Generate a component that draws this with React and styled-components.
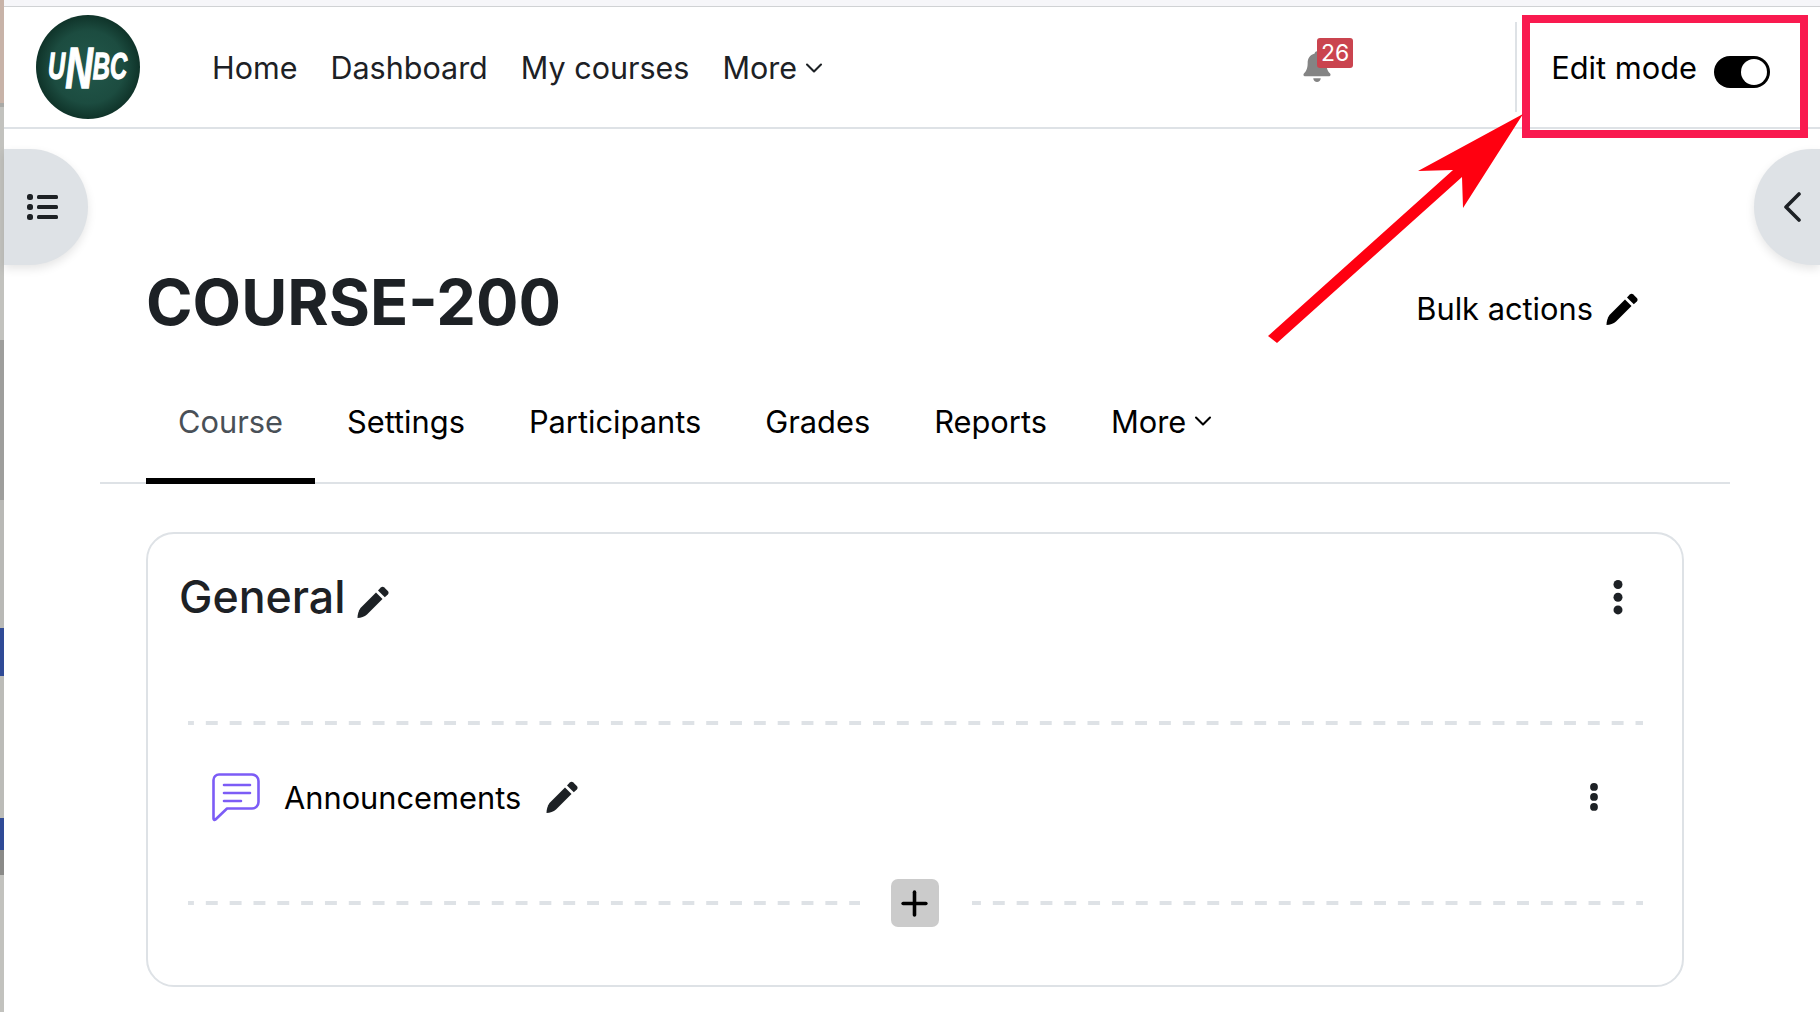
import React from 'react'
import styled, { createGlobalStyle } from 'styled-components'
import { ChevronDown, Plus } from 'lucide-react'

const GlobalStyle = createGlobalStyle`
  html, body { margin: 0; height: 100%; background: #fff; }
  body { font-family: Inter, "Liberation Sans", sans-serif; color: #1d2125; overflow: hidden; }
  #root { height: 100%; }
`

const Screen = styled.div`
  position: relative;
  width: 1820px;
  height: 1012px;
  display: flex;
  overflow: hidden;
`

const DesktopEdge = styled.div`
  width: 4px;
  flex: none;
  background: linear-gradient(180deg,
    #c8b3a8 0 103px, #a9a9a6 103px 107px, #c2c2be 107px 340px, #9e9e9c 340px 500px,
    #b9b9b6 500px 628px, #2f4a96 628px 676px, #bcbcb8 676px 818px, #2f4a96 818px 850px,
    #8a8a88 850px 875px, #c2c2be 875px);
`

const Window = styled.div`
  position: relative;
  flex: 1;
  min-width: 0;
  display: flex;
  flex-direction: column;
`

const TitleStrip = styled.div`
  height: 6px;
  background: #f6f6f9;
  border-bottom: 1px solid #d0d2d4;
`

const Navbar = styled.nav`
  height: 120px;
  display: flex;
  align-items: center;
  padding: 0 0 0 32px;
  border-bottom: 2px solid #dee2e6;
  flex: none;
`

const Logo = styled.svg`
  width: 104px;
  height: 104px;
  flex: none;
  margin-right: 72px;
`

const NavLink = styled.a`
  display: flex;
  align-items: center;
  font-size: 30.5px;
  color: #1d2125;
  margin-right: 33px;
  margin-top: 2px;
  line-height: 36px;
`

const NavChevron = styled(ChevronDown)`
  margin-left: 3px;
`

const Spacer = styled.div`
  flex: 1;
`

const Bell = styled.div`
  position: relative;
  width: 28px;
  height: 34px;
  margin-right: 184px;
  color: #848484;
`

const Badge = styled.span`
  position: absolute;
  left: 14px;
  top: -12px;
  width: 36px;
  height: 30px;
  border-radius: 3px;
  background: #ca444f;
  color: #fff;
  font-size: 23px;
  line-height: 30px;
  text-align: center;
`

const Divider = styled.div`
  width: 2px;
  height: 90px;
  background: #dee2e6;
  align-self: flex-start;
  margin-top: 15px;
`

const EditMode = styled.div`
  display: flex;
  align-items: center;
  margin-left: 34px;
  margin-right: 50px;
  margin-top: 1px;
  font-size: 30.8px;
  line-height: 36px;
  color: #000;
  white-space: nowrap;
`

const Toggle = styled.span`
  display: block;
  position: relative;
  width: 56px;
  height: 32px;
  margin-left: 17px;
  margin-top: 9px;
  border-radius: 16px;
  background: #000;
  &::after {
    content: '';
    position: absolute;
    top: 3px;
    right: 3px;
    width: 26px;
    height: 26px;
    border-radius: 50%;
    background: #fff;
  }
`

const Main = styled.main`
  flex: 1;
  padding: 0 90px 0 96px;
  display: flex;
  flex-direction: column;
`

const HeaderRow = styled.div`
  display: flex;
  align-items: center;
  justify-content: space-between;
  height: 76px;
  margin-top: 135px;
  padding: 0 92px 0 46px;
`

const Title = styled.h1`
  margin: 0;
  font-size: 63px;
  line-height: 76px;
  font-weight: 700;
  color: #1d2125;
`

const BulkActions = styled.div`
  display: flex;
  align-items: center;
  gap: 13px;
  font-size: 30.8px;
  color: #000;
  margin-top: 13px;
`

const Tabs = styled.div`
  display: flex;
  box-sizing: border-box;
  height: 102px;
  margin-top: 42px;
  padding-left: 46px;
  border-bottom: 2px solid #dee2e6;
`

const Tab = styled.a`
  display: flex;
  align-items: center;
  flex: none;
  box-sizing: border-box;
  height: 102px;
  padding: 0 32px 24px;
  font-size: 30.8px;
  color: ${p => (p.$active ? '#495057' : '#000')};
  box-shadow: ${p => (p.$active ? 'inset 0 -6px 0 #000' : 'none')};
`

const Card = styled.section`
  margin: 48px 46px 0;
  height: 455px;
  box-sizing: border-box;
  border: 2px solid #dee2e6;
  border-radius: 28px;
  padding: 0 33px;
  display: flex;
  flex-direction: column;
`

const CardHead = styled.div`
  display: flex;
  align-items: center;
  height: 64px;
  margin-top: 31px;
  padding-right: 25px;
`

const CardTitle = styled.h3`
  margin: 0 0 0 -2px;
  font-size: 44.7px;
  line-height: 64px;
  font-weight: 500;
  color: #1d2125;
`

const TitlePencil = styled.span`
  display: flex;
  margin-left: 11px;
  margin-top: 10px;
`

const Dashed = styled.div`
  flex: 1;
  height: 4px;
  background-image: linear-gradient(90deg, #dee2e6 50%, transparent 50%);
  background-size: 23.83px 4px;
  background-position-x: ${p => p.$phase}px;
`

const FullDash = styled(Dashed)`
  flex: none;
  margin: 92px 6px 0 7px;
`

const Activity = styled.div`
  display: flex;
  align-items: center;
  height: 144px;
  margin-bottom: 10px;
  padding: 0 49px 0 31px;
`

const ActivityName = styled.span`
  font-size: 30.8px;
  color: #000;
  margin: 0 25px 0 24px;
`

const AddRow = styled.div`
  display: flex;
  align-items: center;
  margin: 0 6px 0 7px;
  height: 48px;
`

const AddButton = styled.button`
  width: 48px;
  height: 48px;
  border: 0;
  padding: 0;
  margin: 0 33px 0 31px;
  border-radius: 7px;
  background: #cbcbcb;
  color: #000;
  display: flex;
  align-items: center;
  justify-content: center;
`

const Drawer = styled.div`
  position: absolute;
  top: 149px;
  height: 116px;
  background: #dee2e6;
  box-shadow: 0 4px 10px rgba(0, 0, 0, 0.1);
  display: flex;
  align-items: center;
  color: #1d2125;
  ${p => (p.$side === 'left'
    ? 'left: 0; width: 84px; padding-left: 23px; box-sizing: border-box; border-radius: 0 58px 58px 0;'
    : 'right: 0; width: 66px; padding-left: 30px; box-sizing: border-box; border-radius: 58px 0 0 58px;')}
`

const Annotation = styled.svg`
  position: absolute;
  left: 0;
  top: 0;
  width: 1820px;
  height: 1012px;
  pointer-events: none;
`

function Pencil({ size = 32, color = '#000' }) {
  return (
    <svg width={size} height={size} viewBox="0 0 32 32" fill={color}>
      <path d="M0.500 32c0-3.500 1-7.500 3-10L19 6.500l6.500 6.500L10 28.500c-2.500 2-6 3.500-9.500 3.500z" />
      <path d="M21 4.500l2.800-3c1-1 2.500-1 3.500 0l3.500 3.500c1 1 1 2.500 0 3.500l-3 2.800z" />
    </svg>
  )
}

function Dots({ gap, r }) {
  return (
    <svg width="12" height={gap * 2 + r * 2 + 2} viewBox={`0 0 12 ${gap * 2 + r * 2 + 2}`} fill="#1d2125">
      <circle cx="6" cy={r + 1} r={r} />
      <circle cx="6" cy={gap + r + 1} r={r} />
      <circle cx="6" cy={gap * 2 + r + 1} r={r} />
    </svg>
  )
}

export default function App() {
  return (
    <Screen>
      <GlobalStyle />
      <DesktopEdge />
      <Window>
        <TitleStrip />
        <Navbar>
          <Logo viewBox="0 0 104 104">
            <defs>
              <radialGradient id="logoBg" cx="50%" cy="50%" r="50%">
                <stop offset="0%" stopColor="#22584b" />
                <stop offset="70%" stopColor="#1c4c40" />
                <stop offset="100%" stopColor="#0f3329" />
              </radialGradient>
            </defs>
            <circle cx="52" cy="52" r="52" fill="url(#logoBg)" />
            <text
              transform="translate(12 64) scale(0.66 1)"
              fontFamily="Liberation Sans, sans-serif"
              fontWeight="700"
              fontStyle="italic"
              fontSize="36"
              fill="#fff"
              stroke="#fff"
              strokeWidth="1.300"
            >
              U<tspan fontSize="58" dy="9">N</tspan><tspan dy="-9">BC</tspan>
            </text>
          </Logo>
          <NavLink>Home</NavLink>
          <NavLink>Dashboard</NavLink>
          <NavLink>My courses</NavLink>
          <NavLink>More<NavChevron size={28} strokeWidth={1.8} /></NavLink>
          <Spacer />
          <Bell>
            <svg width="28" height="34" viewBox="0 0 30 34" fill="currentColor">
              <path d="M15 0c-1.500 0-2.500 1-2.500 2.500C7 4 5 8 5 13c0 6-2 9-4 11-1 1-.5 3 1 3h26c1.500 0 2-2 1-3-2-2-4-5-4-11 0-5-2-9-7.500-10.500C17.500 1 16.500 0 15 0z" />
              <path d="M11 29h8c0 2.500-2 4-4 4s-4-1.500-4-4z" />
            </svg>
            <Badge>26</Badge>
          </Bell>
          <Divider />
          <EditMode>Edit mode<Toggle /></EditMode>
        </Navbar>
        <Main>
          <HeaderRow>
            <Title>COURSE-200</Title>
            <BulkActions>Bulk actions <Pencil /></BulkActions>
          </HeaderRow>
          <Tabs>
            <Tab $active>Course</Tab>
            <Tab>Settings</Tab>
            <Tab>Participants</Tab>
            <Tab>Grades</Tab>
            <Tab>Reports</Tab>
            <Tab>More<NavChevron size={28} strokeWidth={1.8} /></Tab>
          </Tabs>
          <Card>
            <CardHead>
              <CardTitle>General</CardTitle>
              <TitlePencil><Pencil color="#1d2125" /></TitlePencil>
              <Spacer />
              <Dots gap={12.7} r={4.5} />
            </CardHead>
            <FullDash $phase={-6} />
            <Activity>
              <svg width="48" height="49" viewBox="0 0 48 49" fill="none" stroke="#7c5cf6" strokeWidth="2.600">
                <path d="M7 1.500h33a6.500 6.500 0 0 1 6.500 6.500v21a6.500 6.500 0 0 1-6.500 6.500H15L3.500 46.500c-1 .8-2 .2-2-1V7A5.500 5.500 0 0 1 7 1.500z" strokeLinejoin="round" />
                <path d="M12 12h26M12 20h26M12 28h17" strokeLinecap="round" />
              </svg>
              <ActivityName>Announcements</ActivityName>
              <Pencil color="#1d2125" />
              <Spacer />
              <Dots gap={10} r={3.9} />
            </Activity>
            <AddRow>
              <Dashed $phase={-6} />
              <AddButton><Plus size={39} strokeWidth={2.2} /></AddButton>
              <Dashed $phase={-3} />
            </AddRow>
          </Card>
        </Main>
        <Drawer $side="left">
          <svg width="31" height="26" viewBox="0 0 31 26" fill="currentColor">
            <rect x="0" y="0" width="6" height="6" rx="2.500" />
            <rect x="0" y="10" width="6" height="6" rx="2.500" />
            <rect x="0" y="20" width="6" height="6" rx="2.500" />
            <rect x="10" y="1" width="21" height="4" rx="1.500" />
            <rect x="10" y="11" width="21" height="4" rx="1.500" />
            <rect x="10" y="21" width="21" height="4" rx="1.500" />
          </svg>
        </Drawer>
        <Drawer $side="right">
          <svg width="17" height="30" viewBox="0 0 17 30" fill="none" stroke="currentColor" strokeWidth="3.600" strokeLinecap="round" strokeLinejoin="round">
            <path d="M15 2L2 15l13 13" />
          </svg>
        </Drawer>
      </Window>
      <Annotation viewBox="0 0 1820 1012">
        <rect x="1526" y="19" width="278" height="115" fill="none" stroke="#f91a4f" strokeWidth="8" />
        <polygon points="1523,114 1463,208 1462,177 1277,343 1268,336 1453,170 1418,171" fill="#ff0010" />
      </Annotation>
    </Screen>
  )
}
